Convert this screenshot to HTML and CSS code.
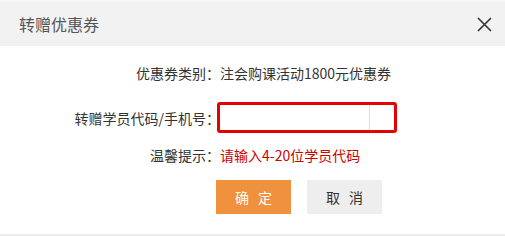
FILE: index.html
```html
<!DOCTYPE html>
<html lang="zh-CN">
<head>
    <meta charset="UTF-8">
    <meta name="viewport" content="width=device-width, initial-scale=1.0">
    <title>转赠优惠券</title>
    <link rel="stylesheet" href="styles.css">
</head>
<body>
    <div class="dialog">
        <div class="dialog-header">
            <h2 class="dialog-title">转赠优惠券</h2>
            <button class="close-btn" type="button" aria-label="关闭">
                <svg width="15" height="15" viewBox="0 0 15 15">
                    <path d="M1 1 L14 14 M14 1 L1 14" stroke="#333" stroke-width="1.6" fill="none"/>
                </svg>
            </button>
        </div>

        <form class="dialog-body" id="transferForm">
            <div class="form-row">
                <span class="form-label">优惠券类别：</span>
                <span class="form-value">注会购课活动1800元优惠券</span>
            </div>

            <div class="form-row">
                <label class="form-label" for="studentCode">转赠学员代码/手机号：</label>
                <div class="input-wrap">
                    <input type="text" id="studentCode" name="studentCode">
                </div>
            </div>

            <div class="form-row">
                <span class="form-label">温馨提示：</span>
                <span class="form-hint">请输入4-20位学员代码</span>
            </div>

            <div class="form-actions">
                <button type="submit" class="btn btn-primary">确 定</button>
                <button type="button" class="btn btn-cancel">取 消</button>
            </div>
        </form>
    </div>
</body>
</html>
```

FILE: styles.css
```css
* {
    margin: 0;
    padding: 0;
    box-sizing: border-box;
}

body {
    font-family: 'Noto Sans CJK SC', 'Liberation Sans', sans-serif;
    background: #ececec;
    width: 505px;
    height: 236px;
    overflow: hidden;
}

.dialog {
    background: white;
    height: 234px;
}

.dialog-header {
    height: 46px;
    background: #f2f2f2;
    border-top: 2px solid #f8f8f8;
    display: flex;
    align-items: center;
    justify-content: space-between;
    padding: 0 13px 0 19px;
}

.dialog-title {
    font-size: 16px;
    font-weight: normal;
    color: #555;
}

.close-btn {
    background: none;
    border: none;
    width: 15px;
    height: 15px;
    display: flex;
    cursor: pointer;
}

.dialog-body {
    padding-top: 12px;
    font-size: 14px;
    color: #333;
}

.form-row {
    display: grid;
    grid-template-columns: 220px 1fr;
    align-items: center;
    height: 30px;
    margin-bottom: 14px;
}

.form-row:nth-child(2) {
    height: 31px;
    margin-bottom: 7px;
}

.form-row:nth-child(3) {
    margin-bottom: 10px;
}

.form-label {
    text-align: right;
}

.form-hint {
    color: #cc0000;
}

.input-wrap {
    width: 180px;
    height: 31px;
    margin-left: -3px;
    border: 3px solid #e60000;
    border-radius: 3px;
    background: white;
}

.input-wrap input {
    width: 150px;
    height: 100%;
    border: none;
    border-right: 1px solid #dddddd;
    outline: none;
    padding: 0 6px;
    font-size: 14px;
    font-family: inherit;
}

.form-actions {
    display: flex;
    gap: 16px;
    padding-left: 216px;
}

.btn {
    width: 75px;
    height: 34px;
    border: none;
    font-size: 14px;
    font-family: inherit;
    letter-spacing: 3px;
    text-indent: 3px;
    cursor: pointer;
}

.btn-primary {
    background: #f0913d;
    color: white;
}

.btn-cancel {
    background: #eeeeee;
    color: #333;
}
```
